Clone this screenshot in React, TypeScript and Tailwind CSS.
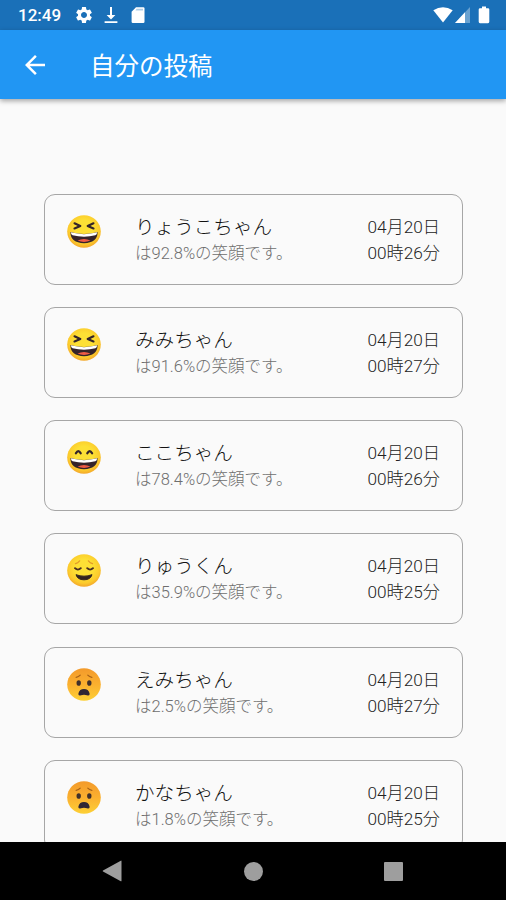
import { MdArrowBack, MdSettings } from 'react-icons/md';

type Mood = 'laughing' | 'grinning' | 'relieved' | 'anguished';

interface Post {
  name: string;
  score: string;
  date: string;
  time: string;
  mood: Mood;
}

const posts: Post[] = [
  { name: 'りょうこちゃん', score: '92.8', date: '04月20日', time: '00時26分', mood: 'laughing' },
  { name: 'みみちゃん', score: '91.6', date: '04月20日', time: '00時27分', mood: 'laughing' },
  { name: 'ここちゃん', score: '78.4', date: '04月20日', time: '00時26分', mood: 'grinning' },
  { name: 'りゅうくん', score: '35.9', date: '04月20日', time: '00時25分', mood: 'relieved' },
  { name: 'えみちゃん', score: '2.5', date: '04月20日', time: '00時27分', mood: 'anguished' },
  { name: 'かなちゃん', score: '1.8', date: '04月20日', time: '00時25分', mood: 'anguished' },
];

function BigSmile() {
  return (
    <>
      <path d="M3.4 17.6Q17 21.4 30.6 17.6Q30.5 29 17 29Q3.5 29 3.4 17.6Z" fill="#35242a" />
      <path d="M3.8 17.9Q17 21.6 30.2 17.9Q30 20.3 28.4 20.9Q17 23.7 5.6 20.9Q4 20.3 3.8 17.9Z" fill="#fff" />
      <path d="M10.5 26.4Q17 22.8 23.5 26.4Q17 29 10.5 26.4Z" fill="#ee5a45" />
    </>
  );
}

function Face({ mood }: { mood: Mood }) {
  const getFeatures = () => {
    switch (mood) {
      case 'laughing':
        return (
          <>
            <g fill="none" stroke="#35242a" strokeWidth="2.1" strokeLinecap="round" strokeLinejoin="round">
              <path d="M7.5 8.5L13.3 11.3L7.5 13.9" />
              <path d="M26.5 8.5L20.7 11.3L26.5 13.9" />
            </g>
            <BigSmile />
          </>
        );
      case 'grinning':
        return (
          <>
            <g fill="none" stroke="#35242a" strokeWidth="2.3" strokeLinecap="round">
              <path d="M8.9 12.6Q11.3 8.2 13.7 12.6" />
              <path d="M20.3 12.6Q22.7 8.2 25.1 12.6" />
            </g>
            <BigSmile />
          </>
        );
      case 'relieved':
        return (
          <>
            <g fill="none" stroke="#e39a28" strokeWidth="1.3" strokeLinecap="round">
              <path d="M8.5 10Q10.8 9.2 12.6 7" />
              <path d="M25.5 10Q23.2 9.2 21.4 7" />
            </g>
            <g fill="none" stroke="#4b3021" strokeWidth="2" strokeLinecap="round">
              <path d="M8 14.6Q10.9 17.6 13.8 14.6" />
              <path d="M20.2 14.6Q23.1 17.6 26 14.6" />
            </g>
            <path
              d="M9 21.3Q17 24.4 25 21.3Q23.5 26.6 17 26.6Q10.5 26.6 9 21.3Z"
              fill="#33231f"
              stroke="#33231f"
              strokeLinejoin="round"
            />
          </>
        );
      case 'anguished':
        return (
          <>
            <g fill="none" stroke="#a86218" strokeWidth="1.3" strokeLinecap="round">
              <path d="M9.2 9.6Q11.6 9.2 13.2 7.4" />
              <path d="M24.8 9.6Q22.4 9.2 20.8 7.4" />
            </g>
            <ellipse cx="11.7" cy="15.4" rx="2.2" ry="2.9" fill="#40302b" />
            <ellipse cx="22.3" cy="15.4" rx="2.2" ry="2.9" fill="#40302b" />
            <path
              d="M11.4 26.2Q12.5 21.6 17 21.6Q21.5 21.6 22.6 26.2Q23 29 20 28Q17 27.2 14 28Q11 29 11.4 26.2Z"
              fill="#302634"
            />
          </>
        );
    }
  };

  const fill = mood === 'anguished' ? 'url(#worried)' : 'url(#happy)';

  return (
    <svg
      viewBox="0 0 34 34"
      preserveAspectRatio="none"
      className="h-[33px] w-[34px] shrink-0"
      aria-label={mood}
    >
      <circle cx="17" cy="17" r="16.8" fill={fill} />
      {getFeatures()}
    </svg>
  );
}

// Gradients shared by all faces
function FaceGradients() {
  return (
    <svg className="absolute h-0 w-0" aria-hidden="true">
      <defs>
        <radialGradient id="happy" cx="0.5" cy="0.42" r="0.58">
          <stop offset="0.45" stopColor="#fde035" />
          <stop offset="0.8" stopColor="#fccb2c" />
          <stop offset="1" stopColor="#f3a72b" />
        </radialGradient>
        <linearGradient id="worried" x1="0" y1="0" x2="0" y2="1">
          <stop offset="0" stopColor="#f39a2b" />
          <stop offset="0.5" stopColor="#fbb02f" />
          <stop offset="1" stopColor="#fdd035" />
        </linearGradient>
      </defs>
    </svg>
  );
}

function StatusBar() {
  return (
    <div className="flex h-[30px] shrink-0 items-center bg-[#1a70b8] pr-[16px] pl-[18px] text-white">
      <span className="w-[56px] pt-px text-[17px] leading-none font-medium">12:49</span>
      <MdSettings className="h-[20px] w-[20px]" />
      <svg viewBox="0 0 14 18" className="ml-[10px] h-[18px] w-[14px]" fill="currentColor">
        <path d="M6 1h2v8h3.4L7 13.6 2.6 9H6zM.6 15.2h12.8v1.8H.6z" />
      </svg>
      <svg viewBox="0 0 14 18" className="ml-[13px] h-[18px] w-[14px]" fill="currentColor">
        <path d="M5 1.2h7.3q1.2 0 1.2 1.2v13.4q0 1.2-1.2 1.2H1.8Q.6 17 .6 15.8V5.8z" />
        <path d="M5.5 2.8h6.5v1.7H4.5z" fill="#1a70b8" opacity="0.35" />
      </svg>
      <svg viewBox="0 0 20 16" className="ml-auto h-[16px] w-[20px]" fill="currentColor">
        <path d="M10 15.6L.3 3.3Q10-2.6 19.7 3.3z" />
      </svg>
      <svg viewBox="0 0 15 16" className="ml-[2px] h-[16px] w-[15px]" fill="currentColor">
        <path d="M15 0v16H0z" opacity="0.35" />
        <path d="M10 5.3V16H0z" />
      </svg>
      <svg viewBox="0 0 12 18" className="ml-[8px] h-[18px] w-[12px]" fill="currentColor">
        <path d="M4 .6h4v1.7h2q1.3 0 1.3 1.3v12.2q0 1.4-1.3 1.4H2Q.7 17.2 .7 15.8V3.6Q.7 2.3 2 2.3h2z" />
      </svg>
    </div>
  );
}

function PostCard({ post }: { post: Post }) {
  return (
    <div className="flex h-[91px] shrink-0 items-start rounded-[11px] border border-[#a6a6a6] pt-5 pr-[22px] pl-[22px]">
      <Face mood={post.mood} />
      <div className="ml-[34px] flex-1 whitespace-nowrap">
        <p className="text-[19.6px] leading-[26px] font-light text-[#111]">{post.name}</p>
        <p className="text-[16.5px] leading-[25px] font-light text-[#6e6e6e]">は{post.score}%の笑顔です。</p>
      </div>
      <div className="-mt-px text-[17.2px] leading-[26px] font-light whitespace-nowrap text-[#222]">
        <p>{post.date}</p>
        <p>{post.time}</p>
      </div>
    </div>
  );
}

export default function App() {
  return (
    <div
      lang="ja"
      className="relative flex h-[900px] w-[506px] flex-col overflow-hidden bg-[#fafafa] font-['Roboto','Noto_Sans_CJK_JP',sans-serif]"
    >
      <FaceGradients />
      <StatusBar />
      <header className="z-10 flex h-[69px] shrink-0 items-center bg-[#2196f3] pl-[20px] text-white shadow-[0_2px_5px_rgba(0,0,0,0.35)]">
        <MdArrowBack className="h-[30px] w-[30px]" />
        <h1 className="ml-[40px] pt-[5px] text-[24.5px] leading-none">自分の投稿</h1>
      </header>

      <main className="flex min-h-0 flex-1 flex-col gap-[22.2px] overflow-hidden pt-[94.8px] pr-[43px] pl-[44px]">
        {posts.map((post) => (
          <PostCard key={post.name} post={post} />
        ))}
      </main>

      {/* System navigation */}
      <nav className="flex h-[58px] shrink-0 items-center justify-between bg-black pr-[103px] pl-[102px] text-[#9e9e9e]">
        <svg viewBox="0 0 20 22" className="h-[22px] w-[20px]" fill="currentColor">
          <path d="M18.8 .7Q19.5 .4 19.5 1.2V20.8Q19.5 21.6 18.8 21.2L1 11.5Q.3 11 1 10.5z" />
        </svg>
        <span className="h-[19px] w-[19px] rounded-full bg-current" />
        <span className="h-[19px] w-[19px] rounded-[1px] bg-current" />
      </nav>
    </div>
  );
}
